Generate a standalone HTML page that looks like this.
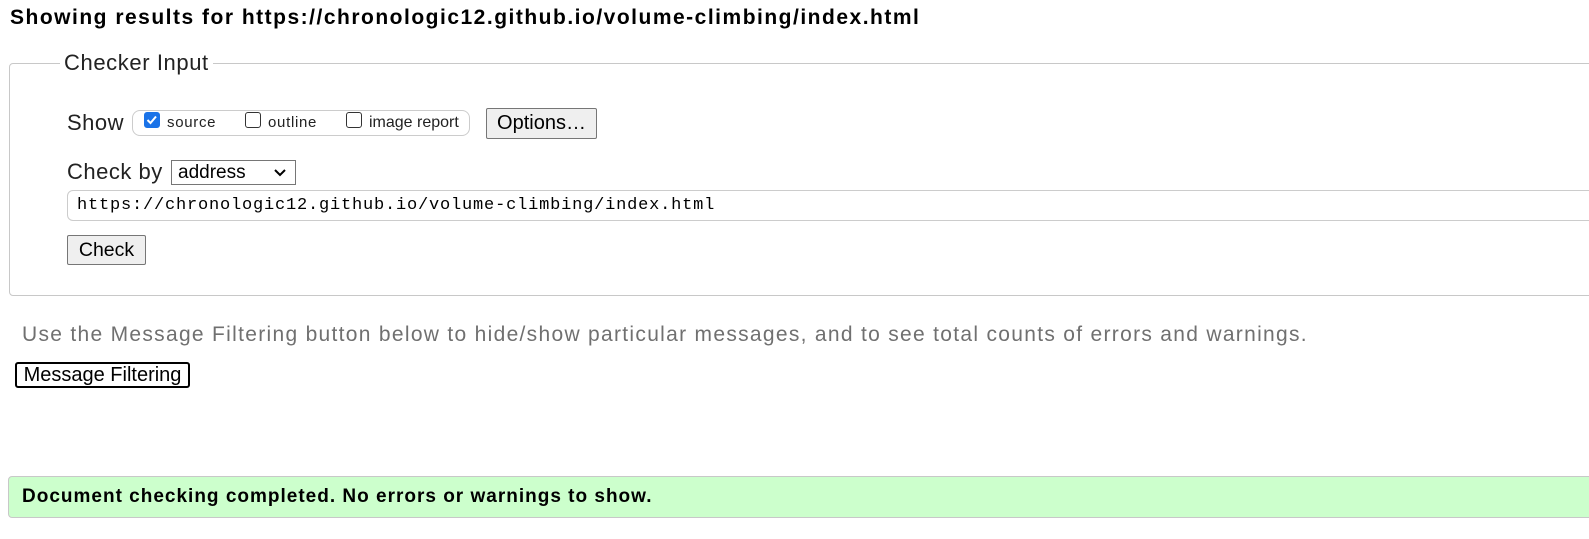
<!DOCTYPE html>
<html><head><meta charset="utf-8"><style>
body{margin:0;width:1589px;height:539px;overflow:hidden;background:#fff;font-family:"Liberation Sans",Arial,sans-serif;color:#000;position:relative}
.a{position:absolute;white-space:nowrap}
.btn{position:absolute;background:#efefef;border:1px solid #767676;border-radius:2px;box-sizing:border-box;font-size:19.5px;display:flex;align-items:center;justify-content:center}
.cb{position:absolute;width:16px;height:16px;border:1px solid #333;border-radius:3px;box-sizing:border-box;background:#fff}
</style></head><body>
<div class="a" style="left:10px;top:6px;font-size:21px;line-height:24px;font-weight:bold;letter-spacing:1.5px">Showing results for https://chronologic12.github.io/volume-climbing/index.html</div>
<div class="a" style="left:9px;top:63px;width:1600px;height:233px;border:1px solid #c8c8c8;border-radius:4px;box-sizing:border-box"></div>
<div class="a" style="left:60px;top:50px;font-size:22px;line-height:26px;letter-spacing:0.6px;background:#fff;padding:0 4px;color:#222">Checker Input</div>
<div class="a" style="left:67px;top:110px;font-size:22px;line-height:26px;letter-spacing:0.5px;color:#222">Show</div>
<div class="a" style="left:132px;top:110px;width:338px;height:26px;border:1px solid #ccc;border-radius:8px;box-sizing:border-box"></div>
<div class="cb" style="left:144px;top:112px;background:#1a73e8;border-color:#1a73e8"><svg width="14" height="14" viewBox="0 0 14 14" style="position:absolute;left:0;top:0"><path d="M2.5 7 L5.5 10 L11 3.5" stroke="#fff" stroke-width="2" fill="none"/></svg></div>
<div class="a" style="left:167px;top:114px;font-size:15px;line-height:18px;letter-spacing:0.7px;color:#222">source</div>
<div class="cb" style="left:245px;top:112px"></div>
<div class="a" style="left:268px;top:114px;font-size:15px;line-height:18px;letter-spacing:0.7px;color:#222">outline</div>
<div class="cb" style="left:346px;top:112px"></div>
<div class="a" style="left:369px;top:114px;font-size:16px;line-height:18px;color:#222">image report</div>
<div class="btn" style="left:486px;top:108px;width:111px;height:31px;font-size:20px">Options…</div>
<div class="a" style="left:67px;top:159px;font-size:22px;line-height:26px;letter-spacing:0.5px;color:#222">Check by</div>
<div class="a" style="left:171px;top:160px;width:125px;height:25px;border:1px solid #767676;box-sizing:border-box;font-size:19px;padding-left:6px;line-height:23px">address<svg width="14" height="10" viewBox="0 0 14 10" style="position:absolute;right:8px;top:7px"><path d="M2 2 L7 7 L12 2" stroke="#000" stroke-width="2" fill="none"/></svg></div>
<div class="a" style="left:67px;top:190px;width:1600px;height:31px;border:1px solid #ccc;border-radius:6px;box-sizing:border-box;font-family:'Liberation Mono',monospace;font-size:17px;letter-spacing:0.8px;line-height:29px;padding-left:9px">https://chronologic12.github.io/volume-climbing/index.html</div>
<div class="btn" style="left:67px;top:235px;width:79px;height:30px">Check</div>
<div class="a" style="left:22px;top:322px;font-size:21px;line-height:26px;letter-spacing:1.3px;color:#707070">Use the Message Filtering button below to hide/show particular messages, and to see total counts of errors and warnings.</div>
<div class="a" style="left:15px;top:362px;width:175px;height:26px;border:2px solid #000;border-radius:3px;box-sizing:border-box;font-size:20px;text-align:center;line-height:22px">Message Filtering</div>
<div class="a" style="left:8px;top:476px;width:1600px;height:42px;background:#ccffcc;border:1px solid #c8c8c8;border-radius:4px;box-sizing:border-box"></div>
<div class="a" style="left:22px;top:486px;font-size:19px;line-height:22px;letter-spacing:1px;font-weight:bold">Document checking completed. No errors or warnings to show.</div>
</body></html>
